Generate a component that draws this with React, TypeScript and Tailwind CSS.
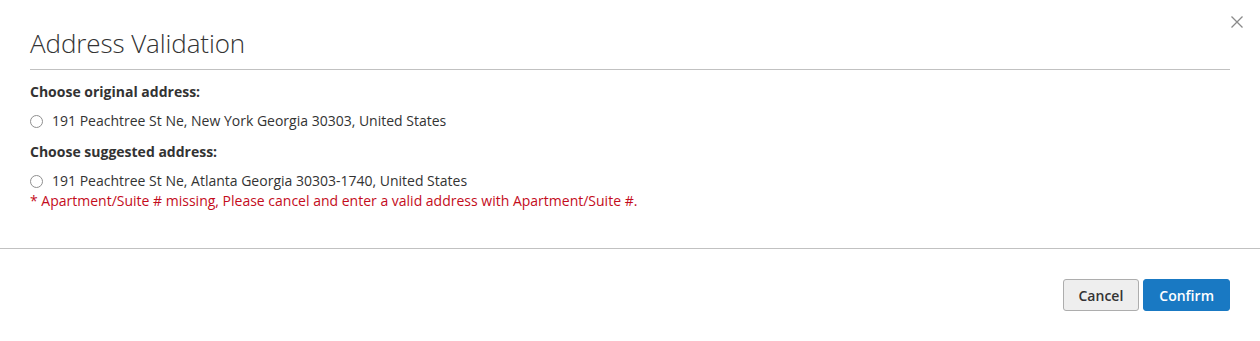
import React from "react";

const font = { fontFamily: '"Open Sans", "Liberation Sans", sans-serif' };

function Radio({ name }: { name: string }) {
  return (
    <input
      type="radio"
      name={name}
      className="m-0 h-[13px] w-[13px] shrink-0 appearance-none rounded-full border border-[#8f8f8f] bg-white"
    />
  );
}

export default function App() {
  return (
    <div className="relative w-full bg-white text-[#333]" style={font}>
      <button
        type="button"
        aria-label="Close"
        className="absolute right-[16px] top-[15px] flex h-[14px] w-[14px] items-center justify-center"
      >
        <svg width="12" height="12" viewBox="0 0 12 12" fill="none">
          <path d="M0.5 0.5 L11.5 11.5 M11.5 0.5 L0.5 11.5" stroke="#8a8a8a" strokeWidth="1.3" />
        </svg>
      </button>

      <div className="px-[30px]">
        <header className="border-b border-[#c1c1c1] pb-[9px] pt-[26px]">
          <h1 className="text-[26px] font-light leading-[34px] tracking-[-0.1px] text-[#333]">
            Address Validation
          </h1>
        </header>

        <div className="pb-[37px] pt-[12px] text-[14px] leading-[20px]">
          <p className="font-bold">Choose original address:</p>
          <label className="mt-[9px] flex items-center gap-[9px]">
            <Radio name="addr" />
            <span>191 Peachtree St Ne, New York Georgia 30303, United States</span>
          </label>
          <p className="mt-[11px] font-bold">Choose suggested address:</p>
          <label className="mt-[9px] flex items-center gap-[9px]">
            <Radio name="addr" />
            <span>191 Peachtree St Ne, Atlanta Georgia 30303-1740, United States</span>
          </label>
          <p className="text-[#c40c1c]">
            * Apartment/Suite # missing, Please cancel and enter a valid address with Apartment/Suite #.
          </p>
        </div>
      </div>

      <footer className="flex justify-end gap-[4px] border-t border-[#c1c1c1] px-[30px] pb-[31px] pt-[30px]">
        <button
          type="button"
          className="h-[32px] rounded-[3px] border border-[#adadad] bg-[#eeeeee] px-[15px] text-[14px] font-semibold text-[#333]"
        >
          Cancel
        </button>
        <button
          type="button"
          className="h-[32px] rounded-[3px] border border-[#1979c3] bg-[#1979c3] px-[15px] text-[14px] font-semibold text-white"
        >
          Confirm
        </button>
      </footer>
    </div>
  );
}
